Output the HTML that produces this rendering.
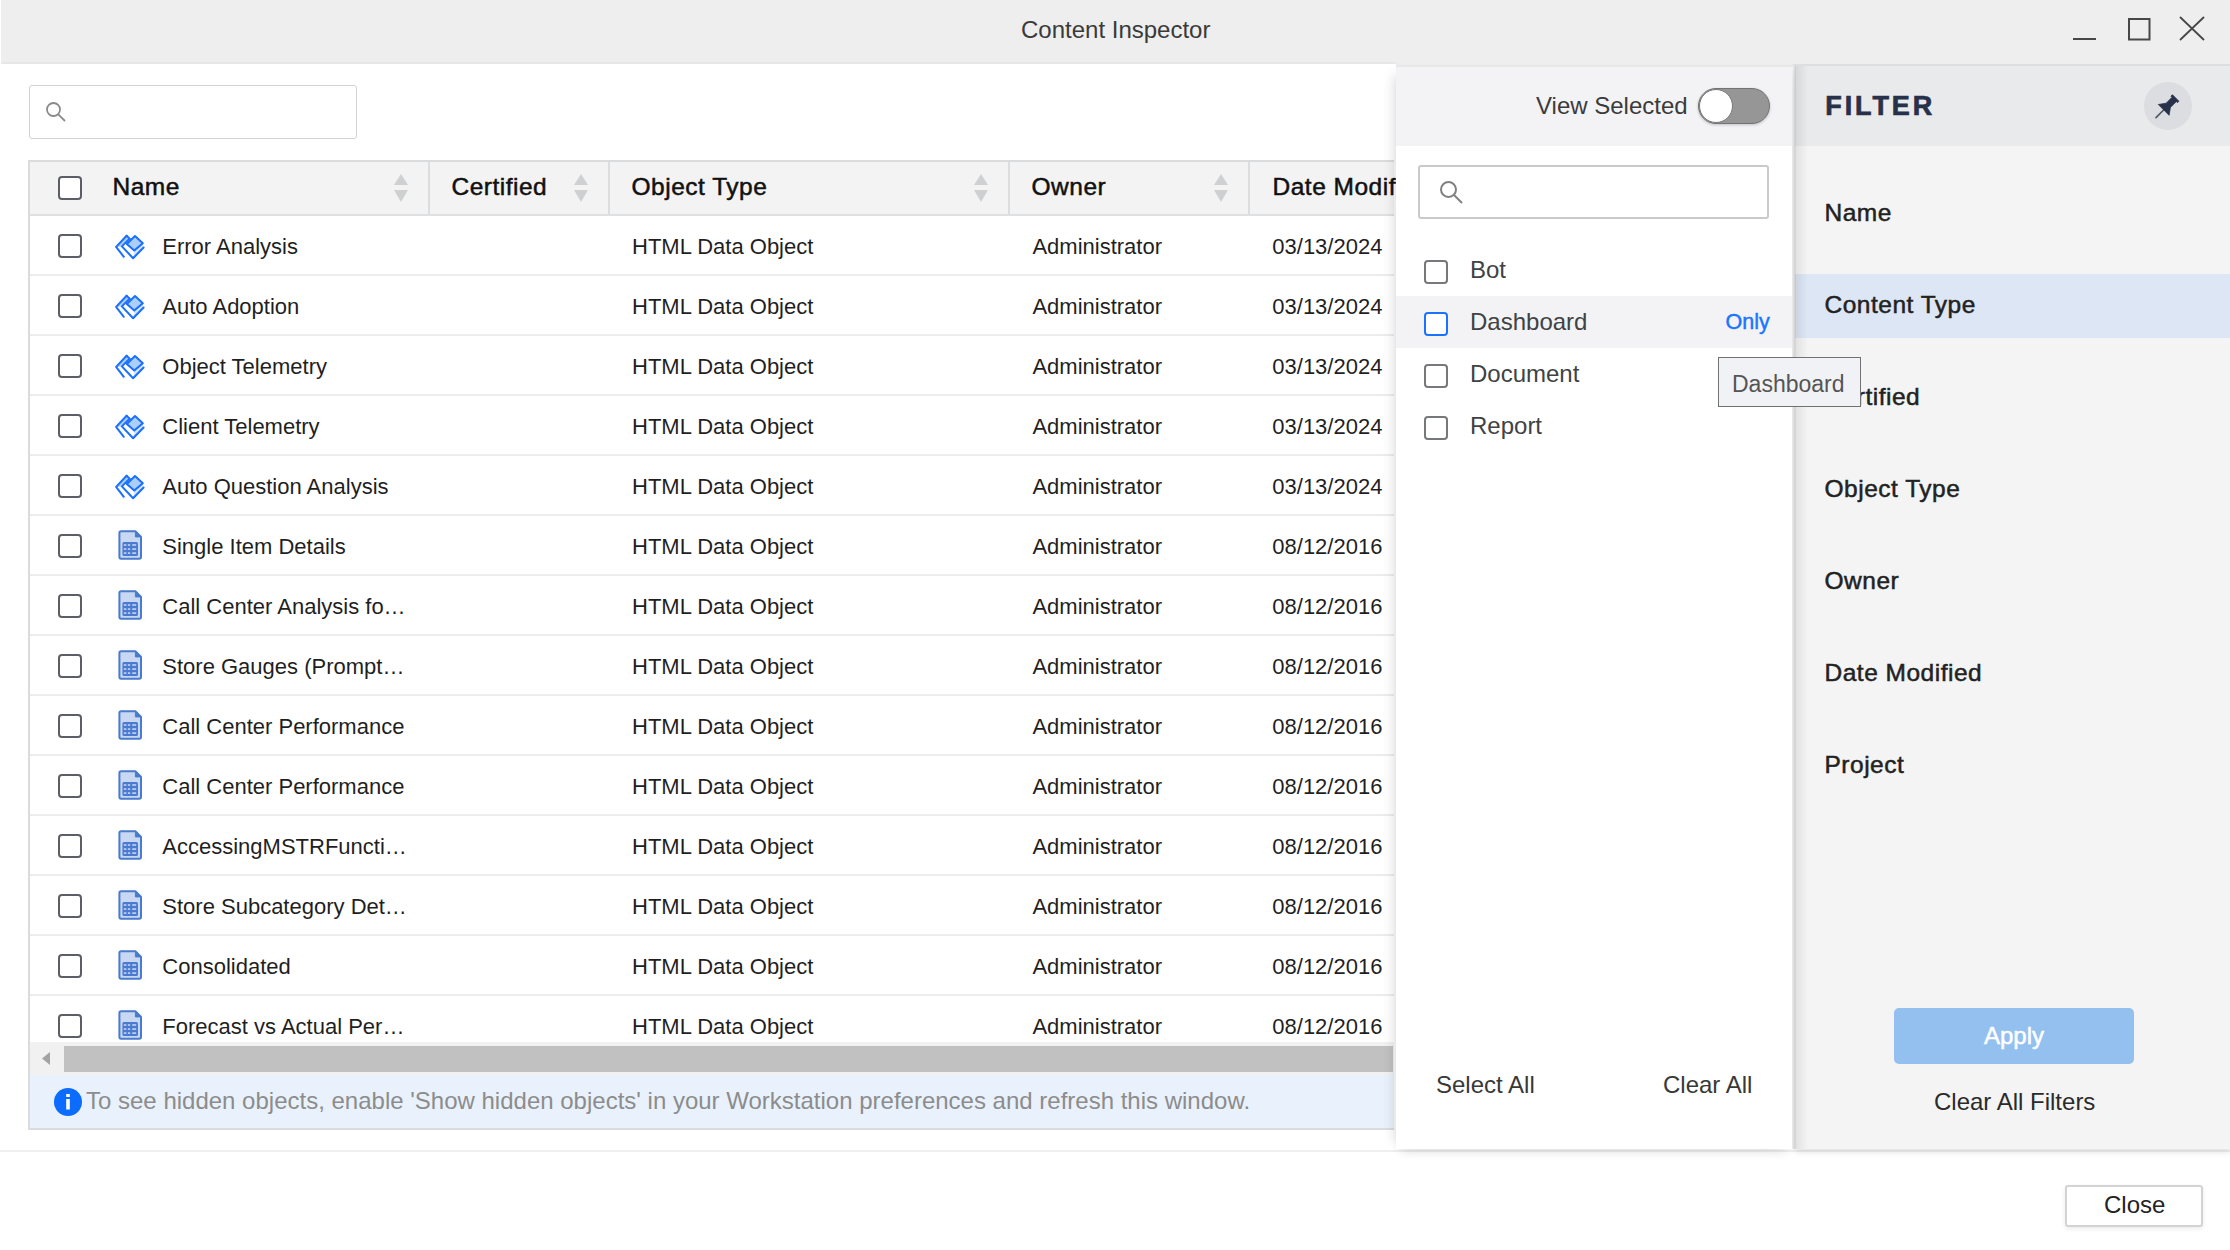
<!DOCTYPE html>
<html><head><meta charset="utf-8">
<style>
html,body{margin:0;padding:0;}
body{width:2230px;height:1250px;position:relative;overflow:hidden;background:#fff;font-family:"Liberation Sans",sans-serif;}
.t{position:absolute;white-space:nowrap;}
.titlebar{position:absolute;left:1px;top:0;width:2229px;height:64px;background:#eeeeee;}
.search{position:absolute;left:29px;top:85px;width:326px;height:52px;border:1.5px solid #d3d3d3;border-radius:3px;background:#fff;}
.tbl{position:absolute;left:28px;top:160px;width:1364px;height:965.5px;border:2px solid #dadbdc;border-right:none;background:#fff;overflow:hidden;}
.thead{position:absolute;left:30px;top:162px;width:1364px;height:52px;background:#f3f3f3;border-bottom:2px solid #dfe0e1;}
.coldiv{position:absolute;top:162px;width:2px;height:52px;background:#dcdde0;}
.rowline{position:absolute;left:30px;width:1364px;height:2px;background:#ececec;margin-top:-1px;}
.cb{position:absolute;width:20px;height:20px;border:2.5px solid #5b5e64;border-radius:4px;background:#fff;}
.ic{position:absolute;}
.sort{position:absolute;top:174px;width:14px;height:28px;}
.sort .up{position:absolute;left:0;top:0;width:0;height:0;border-left:7px solid transparent;border-right:7px solid transparent;border-bottom:11px solid #cfd0d1;}
.sort .dn{position:absolute;left:0;top:16px;width:0;height:0;border-left:7px solid transparent;border-right:7px solid transparent;border-top:12px solid #cfd0d1;}
.hscroll{position:absolute;left:30px;top:1042px;width:1364px;height:33px;background:#f1f1f1;}
.thumb{position:absolute;left:64px;top:1046px;width:1329px;height:26px;background:#c1c1c1;}
.info{position:absolute;left:30px;top:1075px;width:1364px;height:52.5px;background:#e9f2fc;}
.popup{position:absolute;left:1396px;top:67px;width:396px;height:1082px;background:#fff;box-shadow:-9px 0 12px -7px rgba(0,0,0,0.12), 0 7px 10px -5px rgba(0,0,0,0.14);}
.pophead{position:absolute;left:1396px;top:67px;width:396px;height:79px;background:#f3f3f5;}
.psearch{position:absolute;left:1418px;top:165px;width:347px;height:50px;border:2px solid #cacaca;border-radius:3px;background:#fff;}
.pcb{position:absolute;width:20px;height:20px;border:2px solid #76787b;border-radius:4px;background:#fff;}
.pcb.blue{border-color:#1a73ff;}
.fpanel{position:absolute;left:1795px;top:66px;width:435px;height:1083px;background:#f4f4f4;box-shadow:0 3px 6px rgba(0,0,0,0.12);}
.fhead{position:absolute;left:1795px;top:66px;width:435px;height:80px;background:#e9eaec;}
</style></head>
<body>
<div class="titlebar"></div>
<div style="position:absolute;left:1px;top:62px;width:1395px;height:2px;background:#e7e7e7;"></div>
<div class="t" style="left:1021px;top:17.7px;font-size:24px;line-height:24px;color:#3a3a3a;">Content Inspector</div>
<svg style="position:absolute;left:2060px;top:10px" width="160" height="40" viewBox="2060 10 160 40">
<path d="M2073,39 L2096,39" stroke="#474747" stroke-width="2"/>
<rect x="2129" y="19" width="20.5" height="20.5" fill="none" stroke="#474747" stroke-width="2"/>
<path d="M2180,17 L2204,40 M2204,17 L2180,40" stroke="#474747" stroke-width="1.8"/>
</svg>

<div class="search"></div>
<svg style="position:absolute;left:40px;top:96px" width="30" height="30" viewBox="0 0 30 30">
<circle cx="13.5" cy="13.5" r="6.5" fill="none" stroke="#8a8a8a" stroke-width="1.8"/>
<path d="M18.3,18.3 L25,25" stroke="#8a8a8a" stroke-width="1.8"/>
</svg>

<div class="tbl"></div>
<div class="thead"></div>
<div class="cb" style="left:58px;top:176px"></div>
<div class="t" style="left:112.5px;top:175.3px;font-size:24.5px;line-height:24.5px;font-weight:normal;color:#111;-webkit-text-stroke:0.5px #111;letter-spacing:0.5px;">Name</div>
<div class="sort" style="left:394px"><div class="up"></div><div class="dn"></div></div>
<div class="coldiv" style="left:428px"></div>
<div class="t" style="left:451.5px;top:175.3px;font-size:24.5px;line-height:24.5px;font-weight:normal;color:#111;-webkit-text-stroke:0.5px #111;letter-spacing:0.5px;">Certified</div>
<div class="sort" style="left:574px"><div class="up"></div><div class="dn"></div></div>
<div class="coldiv" style="left:608px"></div>
<div class="t" style="left:631.5px;top:175.3px;font-size:24.5px;line-height:24.5px;font-weight:normal;color:#111;-webkit-text-stroke:0.5px #111;letter-spacing:0.5px;">Object Type</div>
<div class="sort" style="left:974px"><div class="up"></div><div class="dn"></div></div>
<div class="coldiv" style="left:1008px"></div>
<div class="t" style="left:1031.5px;top:175.3px;font-size:24.5px;line-height:24.5px;font-weight:normal;color:#111;-webkit-text-stroke:0.5px #111;letter-spacing:0.5px;">Owner</div>
<div class="sort" style="left:1214px"><div class="up"></div><div class="dn"></div></div>
<div class="coldiv" style="left:1248px"></div>
<div class="t" style="left:1272.5px;top:175.3px;font-size:24.5px;line-height:24.5px;font-weight:normal;color:#111;-webkit-text-stroke:0.5px #111;letter-spacing:0.5px;">Date Modified</div>
<div class="rowline" style="top:275px"></div>
<div class="cb" style="left:58px;top:234px"></div>
<svg class="ic" style="left:112px;top:232px" width="36" height="30" viewBox="0 0 36 30">
<path d="M14.6,3.7 L4.1,14.9 L9.9,14.4 L17.6,6.5 Z" fill="#a9cef7"/>
<path d="M22.3,18.6 L30.8,11.3 L31.6,15.5 L21.1,26.2 Z" fill="#d3e6fb"/>
<path d="M14.6,3.7 L4.1,14.9 L11.8,24.8" fill="none" stroke="#1a6fff" stroke-width="2" stroke-linejoin="round" stroke-linecap="round"/>
<path d="M14.6,3.7 L17.6,6.6" fill="none" stroke="#1a6fff" stroke-width="2" stroke-linecap="round"/>
<path d="M17.6,6.6 L9.9,14.4 L21.1,26.2 L31.6,15.5" fill="none" stroke="#1a6fff" stroke-width="2" stroke-linejoin="round" stroke-linecap="round"/>
<path d="M23,4 L30.8,11.3 L22.3,18.6 L14.8,12 Z" fill="#abd0f8" stroke="#1a6fff" stroke-width="2" stroke-linejoin="round"/>
</svg>
<div class="t" style="left:162.3px;top:236.1px;font-size:22px;line-height:22px;font-weight:normal;color:#1f1f1f;">Error Analysis</div>
<div class="t" style="left:632.0px;top:236.1px;font-size:22px;line-height:22px;font-weight:normal;color:#1f1f1f;">HTML Data Object</div>
<div class="t" style="left:1032.4px;top:236.1px;font-size:22px;line-height:22px;font-weight:normal;color:#1f1f1f;">Administrator</div>
<div class="t" style="left:1272.3px;top:236.1px;font-size:22px;line-height:22px;font-weight:normal;color:#1f1f1f;">03/13/2024</div>
<div class="rowline" style="top:335px"></div>
<div class="cb" style="left:58px;top:294px"></div>
<svg class="ic" style="left:112px;top:292px" width="36" height="30" viewBox="0 0 36 30">
<path d="M14.6,3.7 L4.1,14.9 L9.9,14.4 L17.6,6.5 Z" fill="#a9cef7"/>
<path d="M22.3,18.6 L30.8,11.3 L31.6,15.5 L21.1,26.2 Z" fill="#d3e6fb"/>
<path d="M14.6,3.7 L4.1,14.9 L11.8,24.8" fill="none" stroke="#1a6fff" stroke-width="2" stroke-linejoin="round" stroke-linecap="round"/>
<path d="M14.6,3.7 L17.6,6.6" fill="none" stroke="#1a6fff" stroke-width="2" stroke-linecap="round"/>
<path d="M17.6,6.6 L9.9,14.4 L21.1,26.2 L31.6,15.5" fill="none" stroke="#1a6fff" stroke-width="2" stroke-linejoin="round" stroke-linecap="round"/>
<path d="M23,4 L30.8,11.3 L22.3,18.6 L14.8,12 Z" fill="#abd0f8" stroke="#1a6fff" stroke-width="2" stroke-linejoin="round"/>
</svg>
<div class="t" style="left:162.3px;top:296.1px;font-size:22px;line-height:22px;font-weight:normal;color:#1f1f1f;">Auto Adoption</div>
<div class="t" style="left:632.0px;top:296.1px;font-size:22px;line-height:22px;font-weight:normal;color:#1f1f1f;">HTML Data Object</div>
<div class="t" style="left:1032.4px;top:296.1px;font-size:22px;line-height:22px;font-weight:normal;color:#1f1f1f;">Administrator</div>
<div class="t" style="left:1272.3px;top:296.1px;font-size:22px;line-height:22px;font-weight:normal;color:#1f1f1f;">03/13/2024</div>
<div class="rowline" style="top:395px"></div>
<div class="cb" style="left:58px;top:354px"></div>
<svg class="ic" style="left:112px;top:352px" width="36" height="30" viewBox="0 0 36 30">
<path d="M14.6,3.7 L4.1,14.9 L9.9,14.4 L17.6,6.5 Z" fill="#a9cef7"/>
<path d="M22.3,18.6 L30.8,11.3 L31.6,15.5 L21.1,26.2 Z" fill="#d3e6fb"/>
<path d="M14.6,3.7 L4.1,14.9 L11.8,24.8" fill="none" stroke="#1a6fff" stroke-width="2" stroke-linejoin="round" stroke-linecap="round"/>
<path d="M14.6,3.7 L17.6,6.6" fill="none" stroke="#1a6fff" stroke-width="2" stroke-linecap="round"/>
<path d="M17.6,6.6 L9.9,14.4 L21.1,26.2 L31.6,15.5" fill="none" stroke="#1a6fff" stroke-width="2" stroke-linejoin="round" stroke-linecap="round"/>
<path d="M23,4 L30.8,11.3 L22.3,18.6 L14.8,12 Z" fill="#abd0f8" stroke="#1a6fff" stroke-width="2" stroke-linejoin="round"/>
</svg>
<div class="t" style="left:162.3px;top:356.1px;font-size:22px;line-height:22px;font-weight:normal;color:#1f1f1f;">Object Telemetry</div>
<div class="t" style="left:632.0px;top:356.1px;font-size:22px;line-height:22px;font-weight:normal;color:#1f1f1f;">HTML Data Object</div>
<div class="t" style="left:1032.4px;top:356.1px;font-size:22px;line-height:22px;font-weight:normal;color:#1f1f1f;">Administrator</div>
<div class="t" style="left:1272.3px;top:356.1px;font-size:22px;line-height:22px;font-weight:normal;color:#1f1f1f;">03/13/2024</div>
<div class="rowline" style="top:455px"></div>
<div class="cb" style="left:58px;top:414px"></div>
<svg class="ic" style="left:112px;top:412px" width="36" height="30" viewBox="0 0 36 30">
<path d="M14.6,3.7 L4.1,14.9 L9.9,14.4 L17.6,6.5 Z" fill="#a9cef7"/>
<path d="M22.3,18.6 L30.8,11.3 L31.6,15.5 L21.1,26.2 Z" fill="#d3e6fb"/>
<path d="M14.6,3.7 L4.1,14.9 L11.8,24.8" fill="none" stroke="#1a6fff" stroke-width="2" stroke-linejoin="round" stroke-linecap="round"/>
<path d="M14.6,3.7 L17.6,6.6" fill="none" stroke="#1a6fff" stroke-width="2" stroke-linecap="round"/>
<path d="M17.6,6.6 L9.9,14.4 L21.1,26.2 L31.6,15.5" fill="none" stroke="#1a6fff" stroke-width="2" stroke-linejoin="round" stroke-linecap="round"/>
<path d="M23,4 L30.8,11.3 L22.3,18.6 L14.8,12 Z" fill="#abd0f8" stroke="#1a6fff" stroke-width="2" stroke-linejoin="round"/>
</svg>
<div class="t" style="left:162.3px;top:416.1px;font-size:22px;line-height:22px;font-weight:normal;color:#1f1f1f;">Client Telemetry</div>
<div class="t" style="left:632.0px;top:416.1px;font-size:22px;line-height:22px;font-weight:normal;color:#1f1f1f;">HTML Data Object</div>
<div class="t" style="left:1032.4px;top:416.1px;font-size:22px;line-height:22px;font-weight:normal;color:#1f1f1f;">Administrator</div>
<div class="t" style="left:1272.3px;top:416.1px;font-size:22px;line-height:22px;font-weight:normal;color:#1f1f1f;">03/13/2024</div>
<div class="rowline" style="top:515px"></div>
<div class="cb" style="left:58px;top:474px"></div>
<svg class="ic" style="left:112px;top:472px" width="36" height="30" viewBox="0 0 36 30">
<path d="M14.6,3.7 L4.1,14.9 L9.9,14.4 L17.6,6.5 Z" fill="#a9cef7"/>
<path d="M22.3,18.6 L30.8,11.3 L31.6,15.5 L21.1,26.2 Z" fill="#d3e6fb"/>
<path d="M14.6,3.7 L4.1,14.9 L11.8,24.8" fill="none" stroke="#1a6fff" stroke-width="2" stroke-linejoin="round" stroke-linecap="round"/>
<path d="M14.6,3.7 L17.6,6.6" fill="none" stroke="#1a6fff" stroke-width="2" stroke-linecap="round"/>
<path d="M17.6,6.6 L9.9,14.4 L21.1,26.2 L31.6,15.5" fill="none" stroke="#1a6fff" stroke-width="2" stroke-linejoin="round" stroke-linecap="round"/>
<path d="M23,4 L30.8,11.3 L22.3,18.6 L14.8,12 Z" fill="#abd0f8" stroke="#1a6fff" stroke-width="2" stroke-linejoin="round"/>
</svg>
<div class="t" style="left:162.3px;top:476.1px;font-size:22px;line-height:22px;font-weight:normal;color:#1f1f1f;">Auto Question Analysis</div>
<div class="t" style="left:632.0px;top:476.1px;font-size:22px;line-height:22px;font-weight:normal;color:#1f1f1f;">HTML Data Object</div>
<div class="t" style="left:1032.4px;top:476.1px;font-size:22px;line-height:22px;font-weight:normal;color:#1f1f1f;">Administrator</div>
<div class="t" style="left:1272.3px;top:476.1px;font-size:22px;line-height:22px;font-weight:normal;color:#1f1f1f;">03/13/2024</div>
<div class="rowline" style="top:575px"></div>
<div class="cb" style="left:58px;top:534px"></div>
<svg class="ic" style="left:116px;top:528px" width="28" height="34" viewBox="0 0 28 34">
<path d="M3.4,5 Q3.4,3.3 5.1,3.3 L19.4,3.3 L25,8.9 L25,29 Q25,30.7 23.3,30.7 L5.1,30.7 Q3.4,30.7 3.4,29 Z" fill="#c8d8f2" stroke="#4a7bd0" stroke-width="2"/>
<path d="M19.4,3.3 L19.4,8.9 L25,8.9 Z" fill="#4a7bd0" stroke="#4a7bd0" stroke-width="1" stroke-linejoin="round"/>
<rect x="6.4" y="14.1" width="15.6" height="14" rx="1.6" fill="#4a7bd0"/>
<g fill="#b5caee">
<rect x="7.8" y="16.1" width="2.6" height="1.8"/><rect x="11.9" y="16.1" width="2.3" height="1.8"/><rect x="16.2" y="16.1" width="4" height="1.8"/>
<rect x="7.8" y="20.2" width="2.6" height="1.8"/><rect x="11.9" y="20.2" width="2.3" height="1.8"/><rect x="16.2" y="20.2" width="4" height="1.8"/>
<rect x="7.8" y="24.2" width="2.6" height="1.8"/><rect x="11.9" y="24.2" width="2.3" height="1.8"/><rect x="16.2" y="24.2" width="4" height="1.8"/>
</g>
</svg>
<div class="t" style="left:162.3px;top:536.1px;font-size:22px;line-height:22px;font-weight:normal;color:#1f1f1f;">Single Item Details</div>
<div class="t" style="left:632.0px;top:536.1px;font-size:22px;line-height:22px;font-weight:normal;color:#1f1f1f;">HTML Data Object</div>
<div class="t" style="left:1032.4px;top:536.1px;font-size:22px;line-height:22px;font-weight:normal;color:#1f1f1f;">Administrator</div>
<div class="t" style="left:1272.3px;top:536.1px;font-size:22px;line-height:22px;font-weight:normal;color:#1f1f1f;">08/12/2016</div>
<div class="rowline" style="top:635px"></div>
<div class="cb" style="left:58px;top:594px"></div>
<svg class="ic" style="left:116px;top:588px" width="28" height="34" viewBox="0 0 28 34">
<path d="M3.4,5 Q3.4,3.3 5.1,3.3 L19.4,3.3 L25,8.9 L25,29 Q25,30.7 23.3,30.7 L5.1,30.7 Q3.4,30.7 3.4,29 Z" fill="#c8d8f2" stroke="#4a7bd0" stroke-width="2"/>
<path d="M19.4,3.3 L19.4,8.9 L25,8.9 Z" fill="#4a7bd0" stroke="#4a7bd0" stroke-width="1" stroke-linejoin="round"/>
<rect x="6.4" y="14.1" width="15.6" height="14" rx="1.6" fill="#4a7bd0"/>
<g fill="#b5caee">
<rect x="7.8" y="16.1" width="2.6" height="1.8"/><rect x="11.9" y="16.1" width="2.3" height="1.8"/><rect x="16.2" y="16.1" width="4" height="1.8"/>
<rect x="7.8" y="20.2" width="2.6" height="1.8"/><rect x="11.9" y="20.2" width="2.3" height="1.8"/><rect x="16.2" y="20.2" width="4" height="1.8"/>
<rect x="7.8" y="24.2" width="2.6" height="1.8"/><rect x="11.9" y="24.2" width="2.3" height="1.8"/><rect x="16.2" y="24.2" width="4" height="1.8"/>
</g>
</svg>
<div class="t" style="left:162.3px;top:596.1px;font-size:22px;line-height:22px;font-weight:normal;color:#1f1f1f;">Call Center Analysis fo…</div>
<div class="t" style="left:632.0px;top:596.1px;font-size:22px;line-height:22px;font-weight:normal;color:#1f1f1f;">HTML Data Object</div>
<div class="t" style="left:1032.4px;top:596.1px;font-size:22px;line-height:22px;font-weight:normal;color:#1f1f1f;">Administrator</div>
<div class="t" style="left:1272.3px;top:596.1px;font-size:22px;line-height:22px;font-weight:normal;color:#1f1f1f;">08/12/2016</div>
<div class="rowline" style="top:695px"></div>
<div class="cb" style="left:58px;top:654px"></div>
<svg class="ic" style="left:116px;top:648px" width="28" height="34" viewBox="0 0 28 34">
<path d="M3.4,5 Q3.4,3.3 5.1,3.3 L19.4,3.3 L25,8.9 L25,29 Q25,30.7 23.3,30.7 L5.1,30.7 Q3.4,30.7 3.4,29 Z" fill="#c8d8f2" stroke="#4a7bd0" stroke-width="2"/>
<path d="M19.4,3.3 L19.4,8.9 L25,8.9 Z" fill="#4a7bd0" stroke="#4a7bd0" stroke-width="1" stroke-linejoin="round"/>
<rect x="6.4" y="14.1" width="15.6" height="14" rx="1.6" fill="#4a7bd0"/>
<g fill="#b5caee">
<rect x="7.8" y="16.1" width="2.6" height="1.8"/><rect x="11.9" y="16.1" width="2.3" height="1.8"/><rect x="16.2" y="16.1" width="4" height="1.8"/>
<rect x="7.8" y="20.2" width="2.6" height="1.8"/><rect x="11.9" y="20.2" width="2.3" height="1.8"/><rect x="16.2" y="20.2" width="4" height="1.8"/>
<rect x="7.8" y="24.2" width="2.6" height="1.8"/><rect x="11.9" y="24.2" width="2.3" height="1.8"/><rect x="16.2" y="24.2" width="4" height="1.8"/>
</g>
</svg>
<div class="t" style="left:162.3px;top:656.1px;font-size:22px;line-height:22px;font-weight:normal;color:#1f1f1f;">Store Gauges (Prompt…</div>
<div class="t" style="left:632.0px;top:656.1px;font-size:22px;line-height:22px;font-weight:normal;color:#1f1f1f;">HTML Data Object</div>
<div class="t" style="left:1032.4px;top:656.1px;font-size:22px;line-height:22px;font-weight:normal;color:#1f1f1f;">Administrator</div>
<div class="t" style="left:1272.3px;top:656.1px;font-size:22px;line-height:22px;font-weight:normal;color:#1f1f1f;">08/12/2016</div>
<div class="rowline" style="top:755px"></div>
<div class="cb" style="left:58px;top:714px"></div>
<svg class="ic" style="left:116px;top:708px" width="28" height="34" viewBox="0 0 28 34">
<path d="M3.4,5 Q3.4,3.3 5.1,3.3 L19.4,3.3 L25,8.9 L25,29 Q25,30.7 23.3,30.7 L5.1,30.7 Q3.4,30.7 3.4,29 Z" fill="#c8d8f2" stroke="#4a7bd0" stroke-width="2"/>
<path d="M19.4,3.3 L19.4,8.9 L25,8.9 Z" fill="#4a7bd0" stroke="#4a7bd0" stroke-width="1" stroke-linejoin="round"/>
<rect x="6.4" y="14.1" width="15.6" height="14" rx="1.6" fill="#4a7bd0"/>
<g fill="#b5caee">
<rect x="7.8" y="16.1" width="2.6" height="1.8"/><rect x="11.9" y="16.1" width="2.3" height="1.8"/><rect x="16.2" y="16.1" width="4" height="1.8"/>
<rect x="7.8" y="20.2" width="2.6" height="1.8"/><rect x="11.9" y="20.2" width="2.3" height="1.8"/><rect x="16.2" y="20.2" width="4" height="1.8"/>
<rect x="7.8" y="24.2" width="2.6" height="1.8"/><rect x="11.9" y="24.2" width="2.3" height="1.8"/><rect x="16.2" y="24.2" width="4" height="1.8"/>
</g>
</svg>
<div class="t" style="left:162.3px;top:716.1px;font-size:22px;line-height:22px;font-weight:normal;color:#1f1f1f;">Call Center Performance</div>
<div class="t" style="left:632.0px;top:716.1px;font-size:22px;line-height:22px;font-weight:normal;color:#1f1f1f;">HTML Data Object</div>
<div class="t" style="left:1032.4px;top:716.1px;font-size:22px;line-height:22px;font-weight:normal;color:#1f1f1f;">Administrator</div>
<div class="t" style="left:1272.3px;top:716.1px;font-size:22px;line-height:22px;font-weight:normal;color:#1f1f1f;">08/12/2016</div>
<div class="rowline" style="top:815px"></div>
<div class="cb" style="left:58px;top:774px"></div>
<svg class="ic" style="left:116px;top:768px" width="28" height="34" viewBox="0 0 28 34">
<path d="M3.4,5 Q3.4,3.3 5.1,3.3 L19.4,3.3 L25,8.9 L25,29 Q25,30.7 23.3,30.7 L5.1,30.7 Q3.4,30.7 3.4,29 Z" fill="#c8d8f2" stroke="#4a7bd0" stroke-width="2"/>
<path d="M19.4,3.3 L19.4,8.9 L25,8.9 Z" fill="#4a7bd0" stroke="#4a7bd0" stroke-width="1" stroke-linejoin="round"/>
<rect x="6.4" y="14.1" width="15.6" height="14" rx="1.6" fill="#4a7bd0"/>
<g fill="#b5caee">
<rect x="7.8" y="16.1" width="2.6" height="1.8"/><rect x="11.9" y="16.1" width="2.3" height="1.8"/><rect x="16.2" y="16.1" width="4" height="1.8"/>
<rect x="7.8" y="20.2" width="2.6" height="1.8"/><rect x="11.9" y="20.2" width="2.3" height="1.8"/><rect x="16.2" y="20.2" width="4" height="1.8"/>
<rect x="7.8" y="24.2" width="2.6" height="1.8"/><rect x="11.9" y="24.2" width="2.3" height="1.8"/><rect x="16.2" y="24.2" width="4" height="1.8"/>
</g>
</svg>
<div class="t" style="left:162.3px;top:776.1px;font-size:22px;line-height:22px;font-weight:normal;color:#1f1f1f;">Call Center Performance</div>
<div class="t" style="left:632.0px;top:776.1px;font-size:22px;line-height:22px;font-weight:normal;color:#1f1f1f;">HTML Data Object</div>
<div class="t" style="left:1032.4px;top:776.1px;font-size:22px;line-height:22px;font-weight:normal;color:#1f1f1f;">Administrator</div>
<div class="t" style="left:1272.3px;top:776.1px;font-size:22px;line-height:22px;font-weight:normal;color:#1f1f1f;">08/12/2016</div>
<div class="rowline" style="top:875px"></div>
<div class="cb" style="left:58px;top:834px"></div>
<svg class="ic" style="left:116px;top:828px" width="28" height="34" viewBox="0 0 28 34">
<path d="M3.4,5 Q3.4,3.3 5.1,3.3 L19.4,3.3 L25,8.9 L25,29 Q25,30.7 23.3,30.7 L5.1,30.7 Q3.4,30.7 3.4,29 Z" fill="#c8d8f2" stroke="#4a7bd0" stroke-width="2"/>
<path d="M19.4,3.3 L19.4,8.9 L25,8.9 Z" fill="#4a7bd0" stroke="#4a7bd0" stroke-width="1" stroke-linejoin="round"/>
<rect x="6.4" y="14.1" width="15.6" height="14" rx="1.6" fill="#4a7bd0"/>
<g fill="#b5caee">
<rect x="7.8" y="16.1" width="2.6" height="1.8"/><rect x="11.9" y="16.1" width="2.3" height="1.8"/><rect x="16.2" y="16.1" width="4" height="1.8"/>
<rect x="7.8" y="20.2" width="2.6" height="1.8"/><rect x="11.9" y="20.2" width="2.3" height="1.8"/><rect x="16.2" y="20.2" width="4" height="1.8"/>
<rect x="7.8" y="24.2" width="2.6" height="1.8"/><rect x="11.9" y="24.2" width="2.3" height="1.8"/><rect x="16.2" y="24.2" width="4" height="1.8"/>
</g>
</svg>
<div class="t" style="left:162.3px;top:836.1px;font-size:22px;line-height:22px;font-weight:normal;color:#1f1f1f;">AccessingMSTRFuncti…</div>
<div class="t" style="left:632.0px;top:836.1px;font-size:22px;line-height:22px;font-weight:normal;color:#1f1f1f;">HTML Data Object</div>
<div class="t" style="left:1032.4px;top:836.1px;font-size:22px;line-height:22px;font-weight:normal;color:#1f1f1f;">Administrator</div>
<div class="t" style="left:1272.3px;top:836.1px;font-size:22px;line-height:22px;font-weight:normal;color:#1f1f1f;">08/12/2016</div>
<div class="rowline" style="top:935px"></div>
<div class="cb" style="left:58px;top:894px"></div>
<svg class="ic" style="left:116px;top:888px" width="28" height="34" viewBox="0 0 28 34">
<path d="M3.4,5 Q3.4,3.3 5.1,3.3 L19.4,3.3 L25,8.9 L25,29 Q25,30.7 23.3,30.7 L5.1,30.7 Q3.4,30.7 3.4,29 Z" fill="#c8d8f2" stroke="#4a7bd0" stroke-width="2"/>
<path d="M19.4,3.3 L19.4,8.9 L25,8.9 Z" fill="#4a7bd0" stroke="#4a7bd0" stroke-width="1" stroke-linejoin="round"/>
<rect x="6.4" y="14.1" width="15.6" height="14" rx="1.6" fill="#4a7bd0"/>
<g fill="#b5caee">
<rect x="7.8" y="16.1" width="2.6" height="1.8"/><rect x="11.9" y="16.1" width="2.3" height="1.8"/><rect x="16.2" y="16.1" width="4" height="1.8"/>
<rect x="7.8" y="20.2" width="2.6" height="1.8"/><rect x="11.9" y="20.2" width="2.3" height="1.8"/><rect x="16.2" y="20.2" width="4" height="1.8"/>
<rect x="7.8" y="24.2" width="2.6" height="1.8"/><rect x="11.9" y="24.2" width="2.3" height="1.8"/><rect x="16.2" y="24.2" width="4" height="1.8"/>
</g>
</svg>
<div class="t" style="left:162.3px;top:896.1px;font-size:22px;line-height:22px;font-weight:normal;color:#1f1f1f;">Store Subcategory Det…</div>
<div class="t" style="left:632.0px;top:896.1px;font-size:22px;line-height:22px;font-weight:normal;color:#1f1f1f;">HTML Data Object</div>
<div class="t" style="left:1032.4px;top:896.1px;font-size:22px;line-height:22px;font-weight:normal;color:#1f1f1f;">Administrator</div>
<div class="t" style="left:1272.3px;top:896.1px;font-size:22px;line-height:22px;font-weight:normal;color:#1f1f1f;">08/12/2016</div>
<div class="rowline" style="top:995px"></div>
<div class="cb" style="left:58px;top:954px"></div>
<svg class="ic" style="left:116px;top:948px" width="28" height="34" viewBox="0 0 28 34">
<path d="M3.4,5 Q3.4,3.3 5.1,3.3 L19.4,3.3 L25,8.9 L25,29 Q25,30.7 23.3,30.7 L5.1,30.7 Q3.4,30.7 3.4,29 Z" fill="#c8d8f2" stroke="#4a7bd0" stroke-width="2"/>
<path d="M19.4,3.3 L19.4,8.9 L25,8.9 Z" fill="#4a7bd0" stroke="#4a7bd0" stroke-width="1" stroke-linejoin="round"/>
<rect x="6.4" y="14.1" width="15.6" height="14" rx="1.6" fill="#4a7bd0"/>
<g fill="#b5caee">
<rect x="7.8" y="16.1" width="2.6" height="1.8"/><rect x="11.9" y="16.1" width="2.3" height="1.8"/><rect x="16.2" y="16.1" width="4" height="1.8"/>
<rect x="7.8" y="20.2" width="2.6" height="1.8"/><rect x="11.9" y="20.2" width="2.3" height="1.8"/><rect x="16.2" y="20.2" width="4" height="1.8"/>
<rect x="7.8" y="24.2" width="2.6" height="1.8"/><rect x="11.9" y="24.2" width="2.3" height="1.8"/><rect x="16.2" y="24.2" width="4" height="1.8"/>
</g>
</svg>
<div class="t" style="left:162.3px;top:956.1px;font-size:22px;line-height:22px;font-weight:normal;color:#1f1f1f;">Consolidated</div>
<div class="t" style="left:632.0px;top:956.1px;font-size:22px;line-height:22px;font-weight:normal;color:#1f1f1f;">HTML Data Object</div>
<div class="t" style="left:1032.4px;top:956.1px;font-size:22px;line-height:22px;font-weight:normal;color:#1f1f1f;">Administrator</div>
<div class="t" style="left:1272.3px;top:956.1px;font-size:22px;line-height:22px;font-weight:normal;color:#1f1f1f;">08/12/2016</div>
<div class="rowline" style="top:1055px"></div>
<div class="cb" style="left:58px;top:1014px"></div>
<svg class="ic" style="left:116px;top:1008px" width="28" height="34" viewBox="0 0 28 34">
<path d="M3.4,5 Q3.4,3.3 5.1,3.3 L19.4,3.3 L25,8.9 L25,29 Q25,30.7 23.3,30.7 L5.1,30.7 Q3.4,30.7 3.4,29 Z" fill="#c8d8f2" stroke="#4a7bd0" stroke-width="2"/>
<path d="M19.4,3.3 L19.4,8.9 L25,8.9 Z" fill="#4a7bd0" stroke="#4a7bd0" stroke-width="1" stroke-linejoin="round"/>
<rect x="6.4" y="14.1" width="15.6" height="14" rx="1.6" fill="#4a7bd0"/>
<g fill="#b5caee">
<rect x="7.8" y="16.1" width="2.6" height="1.8"/><rect x="11.9" y="16.1" width="2.3" height="1.8"/><rect x="16.2" y="16.1" width="4" height="1.8"/>
<rect x="7.8" y="20.2" width="2.6" height="1.8"/><rect x="11.9" y="20.2" width="2.3" height="1.8"/><rect x="16.2" y="20.2" width="4" height="1.8"/>
<rect x="7.8" y="24.2" width="2.6" height="1.8"/><rect x="11.9" y="24.2" width="2.3" height="1.8"/><rect x="16.2" y="24.2" width="4" height="1.8"/>
</g>
</svg>
<div class="t" style="left:162.3px;top:1016.1px;font-size:22px;line-height:22px;font-weight:normal;color:#1f1f1f;">Forecast vs Actual Per…</div>
<div class="t" style="left:632.0px;top:1016.1px;font-size:22px;line-height:22px;font-weight:normal;color:#1f1f1f;">HTML Data Object</div>
<div class="t" style="left:1032.4px;top:1016.1px;font-size:22px;line-height:22px;font-weight:normal;color:#1f1f1f;">Administrator</div>
<div class="t" style="left:1272.3px;top:1016.1px;font-size:22px;line-height:22px;font-weight:normal;color:#1f1f1f;">08/12/2016</div>
<div class="hscroll"></div>
<svg style="position:absolute;left:40px;top:1050px" width="14" height="18" viewBox="0 0 14 18"><path d="M2,8.5 L10,2 L10,15 Z" fill="#a3a3a3"/></svg>
<div class="thumb"></div>
<div class="info"></div>
<svg style="position:absolute;left:53px;top:1087px" width="30" height="30" viewBox="0 0 30 30">
<circle cx="15" cy="15" r="14" fill="#0b6cff"/>
<rect x="13.2" y="7" width="3.6" height="3" fill="#fff"/>
<rect x="13.2" y="12" width="3.6" height="10.5" fill="#fff"/>
</svg>
<div class="t" style="left:86.0px;top:1089.3px;font-size:24px;line-height:24px;font-weight:normal;color:#8c8c8c;">To see hidden objects, enable 'Show hidden objects' in your Workstation preferences and refresh this window.</div>
<div style="position:absolute;left:0;top:1150px;width:2230px;height:2px;background:#efefef;"></div>
<div style="position:absolute;left:2065px;top:1185px;width:134px;height:38px;border:2px solid #d3d3d3;border-radius:3px;background:#fff;box-shadow:0 2px 5px rgba(0,0,0,0.08);"></div>
<div class="t" style="left:2104.0px;top:1193.2px;font-size:24px;line-height:24px;font-weight:normal;color:#222;">Close</div>

<div class="fpanel"></div>
<div class="fhead"></div>
<div style="position:absolute;left:1793px;top:64px;width:437px;height:2px;background:#dedede;"></div>
<div class="t" style="left:1825.3px;top:93.4px;font-size:27px;line-height:27px;font-weight:bold;color:#27314a;letter-spacing:2.9px;-webkit-text-stroke:0.7px #27314a;">FILTER</div>
<div style="position:absolute;left:2144px;top:82px;width:48px;height:48px;border-radius:50%;background:#dcdde0;"></div>
<svg style="position:absolute;left:2150px;top:88px" width="36" height="36" viewBox="0 0 36 36">
<path d="M6,29.6 L13.6,22" stroke="#505868" stroke-width="1.7" stroke-linecap="round"/>
<path d="M22.4,6.7 L28.9,13.2 L27.4,14.7 L26.3,13.6 L20.4,19.4 L19.1,27.3 L8.3,16.5 L16.2,15.2 L22.0,9.3 L20.9,8.2 Z" fill="#27324a" stroke="#27324a" stroke-width="0.8" stroke-linejoin="round"/>
</svg>
<div style="position:absolute;left:1795px;top:274px;width:435px;height:64px;background:#dde6f4;"></div>
<div class="t" style="left:1824.5px;top:201.3px;font-size:24.5px;line-height:24.5px;font-weight:normal;color:#222;-webkit-text-stroke:0.5px #222;letter-spacing:0.5px;">Name</div>
<div class="t" style="left:1824.5px;top:293.3px;font-size:24.5px;line-height:24.5px;font-weight:normal;color:#222;-webkit-text-stroke:0.5px #222;letter-spacing:0.5px;">Content Type</div>
<div class="t" style="left:1824.5px;top:385.3px;font-size:24.5px;line-height:24.5px;font-weight:normal;color:#222;-webkit-text-stroke:0.5px #222;letter-spacing:0.5px;">Certified</div>
<div class="t" style="left:1824.5px;top:477.3px;font-size:24.5px;line-height:24.5px;font-weight:normal;color:#222;-webkit-text-stroke:0.5px #222;letter-spacing:0.5px;">Object Type</div>
<div class="t" style="left:1824.5px;top:569.3px;font-size:24.5px;line-height:24.5px;font-weight:normal;color:#222;-webkit-text-stroke:0.5px #222;letter-spacing:0.5px;">Owner</div>
<div class="t" style="left:1824.5px;top:661.3px;font-size:24.5px;line-height:24.5px;font-weight:normal;color:#222;-webkit-text-stroke:0.5px #222;letter-spacing:0.5px;">Date Modified</div>
<div class="t" style="left:1824.5px;top:753.3px;font-size:24.5px;line-height:24.5px;font-weight:normal;color:#222;-webkit-text-stroke:0.5px #222;letter-spacing:0.5px;">Project</div>
<div class="btnapply" style="position:absolute;left:1894px;top:1008px;width:240px;height:56px;border-radius:5px;background:#93c0ef;"></div>
<div class="t" style="left:1984.0px;top:1023.7px;font-size:24px;line-height:24px;font-weight:normal;color:#fff;-webkit-text-stroke:0.5px #fff;">Apply</div>
<div class="t" style="left:1934.0px;top:1089.7px;font-size:24px;line-height:24px;font-weight:normal;color:#2b2b2b;">Clear All Filters</div>
<div style="position:absolute;left:1796px;top:66px;width:12px;height:1083px;background:linear-gradient(to right, rgba(0,0,0,0.075), rgba(0,0,0,0));"></div>
<div style="position:absolute;left:1791px;top:66px;width:5px;height:1083px;background:linear-gradient(to right, rgba(0,0,0,0), rgba(0,0,0,0.13) 80%, rgba(0,0,0,0.11));"></div>

<div class="popup"></div>
<div class="pophead"></div>
<div style="position:absolute;left:1396px;top:64px;width:397px;height:3px;background:linear-gradient(#ededed,#e5e5e5);"></div>
<div class="t" style="left:1536.0px;top:93.7px;font-size:24px;line-height:24px;font-weight:normal;color:#3b3b3b;">View Selected</div>
<div style="position:absolute;left:1698px;top:88px;width:70px;height:34px;border-radius:18px;background:#969696;border:1px solid #747474;box-shadow:0 1px 3px rgba(0,0,0,0.2);"></div>
<div style="position:absolute;left:1699px;top:89px;width:32px;height:32px;border-radius:50%;background:#fff;border:1.2px solid #7a7a7a;"></div>
<div class="psearch"></div>
<svg style="position:absolute;left:1436px;top:176px" width="32" height="32" viewBox="0 0 32 32">
<circle cx="12.5" cy="13.5" r="7.5" fill="none" stroke="#808080" stroke-width="2"/>
<path d="M18,19 L26,27" stroke="#808080" stroke-width="2"/>
</svg>
<div style="position:absolute;left:1396px;top:296px;width:396px;height:52px;background:#f3f3f5;"></div>
<div class="pcb" style="left:1424px;top:260px"></div>
<div class="t" style="left:1470.0px;top:257.7px;font-size:24px;line-height:24px;font-weight:normal;color:#404244;">Bot</div>
<div class="pcb blue" style="left:1424px;top:312px"></div>
<div class="t" style="left:1470.0px;top:309.7px;font-size:24px;line-height:24px;font-weight:normal;color:#404244;">Dashboard</div>
<div class="pcb" style="left:1424px;top:364px"></div>
<div class="t" style="left:1470.0px;top:361.7px;font-size:24px;line-height:24px;font-weight:normal;color:#404244;">Document</div>
<div class="pcb" style="left:1424px;top:416px"></div>
<div class="t" style="left:1470.0px;top:413.7px;font-size:24px;line-height:24px;font-weight:normal;color:#404244;">Report</div>
<div class="t" style="left:1725.5px;top:311.8px;font-size:21.5px;line-height:21.5px;font-weight:normal;color:#1a75ff;-webkit-text-stroke:0.45px #1a75ff;">Only</div>
<div class="t" style="left:1436.0px;top:1073.2px;font-size:24px;line-height:24px;font-weight:normal;color:#383838;">Select All</div>
<div class="t" style="left:1663.0px;top:1073.2px;font-size:24px;line-height:24px;font-weight:normal;color:#383838;">Clear All</div>
<div style="position:absolute;left:1718px;top:357px;width:141px;height:48px;border:1.5px solid #717171;background:#f1f2f6;"></div>
<div class="t" style="left:1732.0px;top:372.5px;font-size:23px;line-height:23px;font-weight:normal;color:#555;">Dashboard</div>
</body></html>
